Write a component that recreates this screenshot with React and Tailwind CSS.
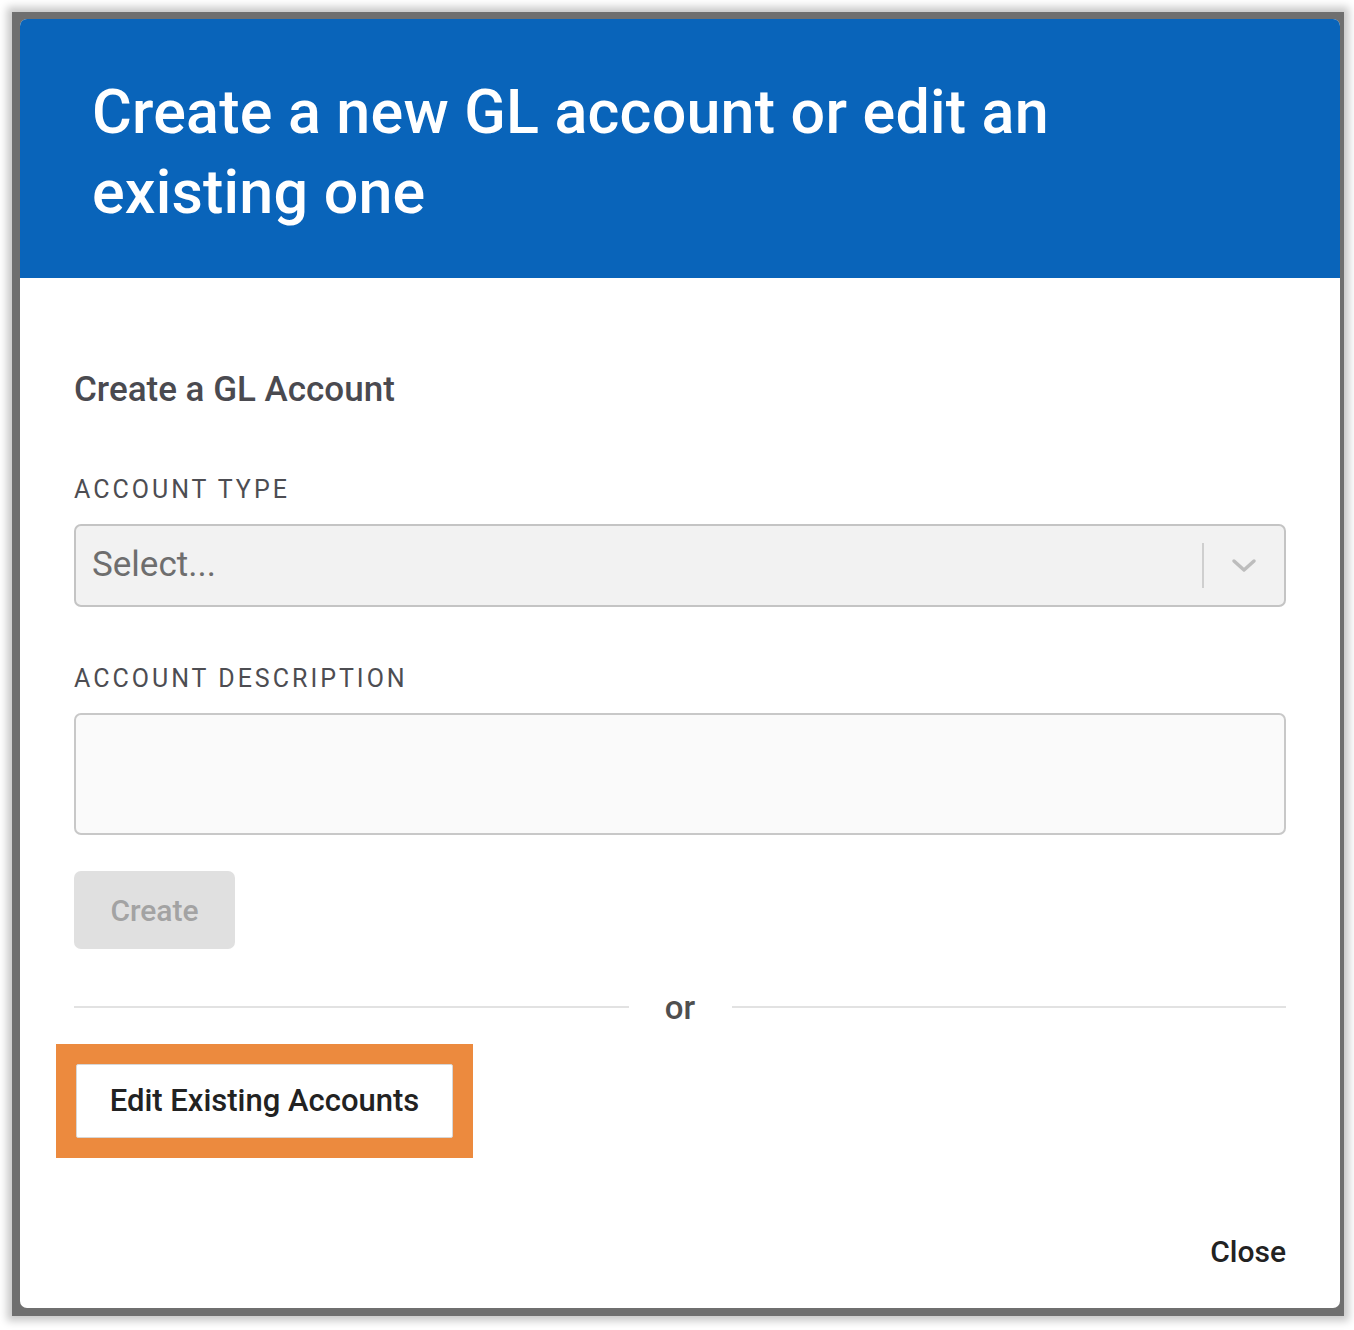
export default function App() {
  return (
    <div
      className="w-[1354px] h-[1330px] bg-white pt-[12px] pl-[12px]"
      style={{ fontFamily: "Roboto, 'Noto Sans', sans-serif" }}
    >
      <div className="w-[1332px] h-[1304px] bg-[#6f6f6f] shadow-[0_0_8px_5px_rgba(0,0,0,0.22)] pt-[7px] pl-[8px]">
        <div className="w-[1320px] h-[1289px] bg-white rounded-[7px] overflow-hidden flex flex-col">
          <div className="h-[259px] bg-[#0964ba] pl-[72px] pt-[53px]">
            <h1 className="text-white text-[61px] leading-[80px] font-medium tracking-[0.2px] w-[1000px]">
              Create a new GL account or edit an existing one
            </h1>
          </div>
          <div className="flex-1 px-[54px] pt-[91px] flex flex-col">
            <h2 className="text-[#4a4a50] text-[35px] leading-[42px] font-medium">Create a GL Account</h2>
            <div className="mt-[65px] text-[#4d4d52] text-[25px] leading-[28px] tracking-[3px]">ACCOUNT TYPE</div>
            <div className="mt-[20px] h-[83px] bg-[#f2f2f2] border-2 border-[#c4c4c4] rounded-[7px] flex items-center pl-[16px]">
              <span className="flex-1 text-[#6e6e6e] text-[35px]">Select...</span>
              <div className="w-[2px] h-[45px] bg-[#cfcfcf]" />
              <div className="w-[80px] flex items-center justify-center">
                <svg width="26" height="16" viewBox="0 0 26 16">
                  <path d="M3 3 L13 12 L23 3" fill="none" stroke="#bdbdbd" strokeWidth="3.5" strokeLinecap="round" strokeLinejoin="round" />
                </svg>
              </div>
            </div>
            <div className="mt-[58px] text-[#4d4d52] text-[25px] leading-[28px] tracking-[3px]">ACCOUNT DESCRIPTION</div>
            <div className="mt-[20px] h-[122px] bg-[#fafafa] border-2 border-[#c8c8c8] rounded-[7px]" />
            <div className="mt-[36px]">
              <div className="w-[161px] h-[78px] bg-[#e0e0e0] rounded-[7px] flex items-center justify-center text-[#a3a3a3] text-[30px] font-medium">
                Create
              </div>
            </div>
            <div className="mt-[39px] flex items-center">
              <div className="flex-1 h-[2px] bg-[#e2e2e2]" />
              <span className="w-[103px] text-center text-[#4f4f4f] text-[33px] font-medium leading-[36px] pt-[2px]">or</span>
              <div className="flex-1 h-[2px] bg-[#e2e2e2]" />
            </div>
            <div className="mt-[18px] -ml-[18px]">
              <div className="inline-flex bg-[#ec8a3e] p-[20px]">
                <div className="w-[377px] h-[74px] bg-white border border-[#d6d6d6] rounded-[2px] flex items-center justify-center text-[#222222] text-[31px] font-medium">
                  Edit Existing Accounts
                </div>
              </div>
            </div>
            <div className="mt-[76px] flex justify-end">
              <span className="text-[#222222] text-[30px] font-medium leading-[36px]">Close</span>
            </div>
          </div>
        </div>
      </div>
    </div>
  );
}
